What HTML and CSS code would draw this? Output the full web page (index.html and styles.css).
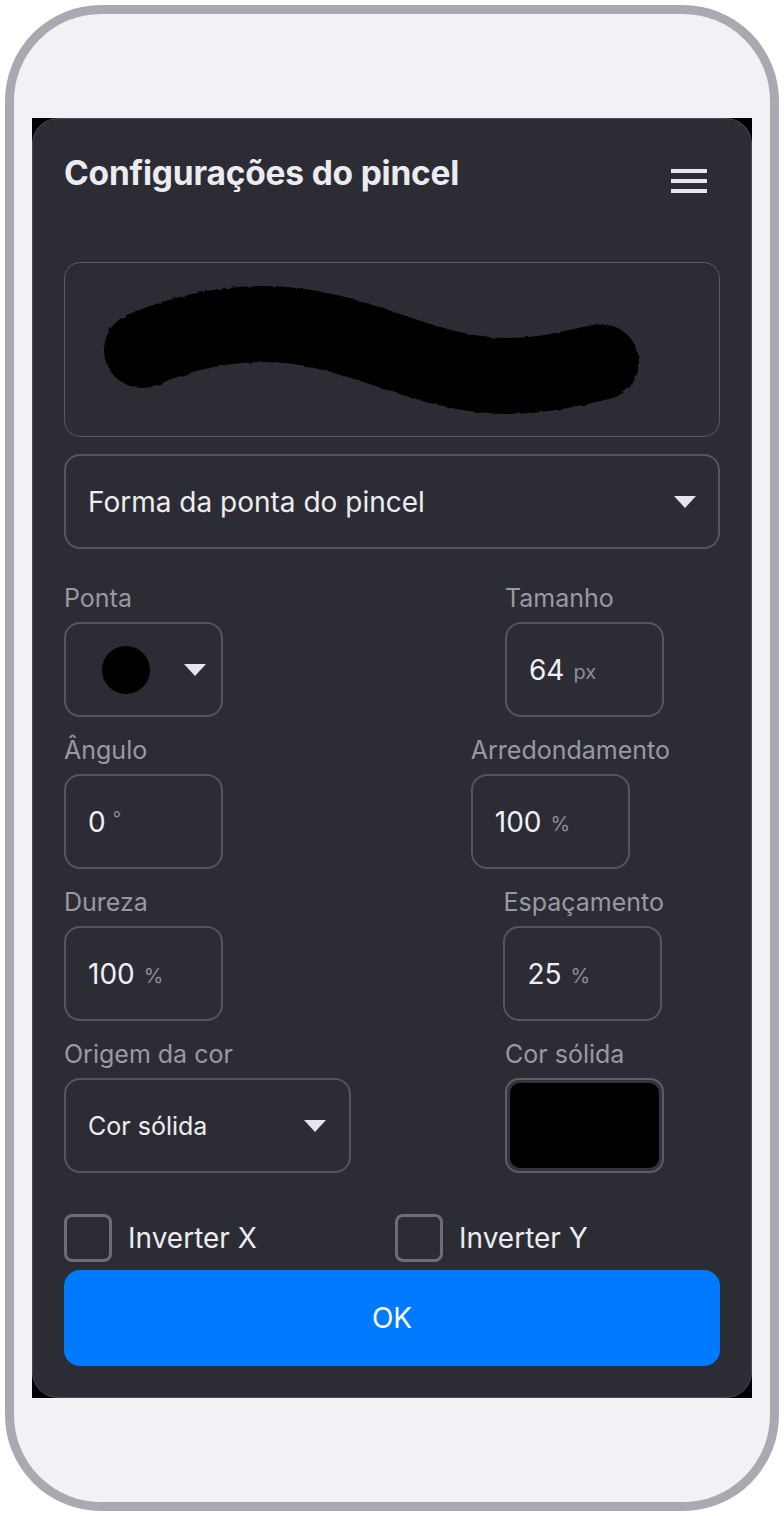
FILE: index.html
```html
<!DOCTYPE html>
<html lang="pt">
<head>
<meta charset="utf-8">
<title>Configurações do pincel</title>
<link rel="stylesheet" href="styles.css">
</head>
<body>
<div class="phone">
  <div class="screen">
    <div class="panel">
      <div class="header">
        <h1 class="title">Configurações do pincel</h1>
        <svg class="menu" width="36" height="26" viewBox="0 0 36 26" aria-hidden="true">
          <rect x="0" y="0" width="36" height="4" fill="#e6e6eb"/>
          <rect x="0" y="10" width="36" height="4" fill="#e6e6eb"/>
          <rect x="0" y="20" width="36" height="4" fill="#e6e6eb"/>
        </svg>
      </div>

      <div class="preview">
        <svg class="stroke" width="653" height="173" viewBox="1 1 653 173" aria-hidden="true">
          <defs>
            <filter id="rough" filterUnits="userSpaceOnUse" x="0" y="0" width="660" height="180">
              <feTurbulence type="fractalNoise" baseFrequency="0.12" numOctaves="2" seed="3" result="n"/>
              <feDisplacementMap in="SourceGraphic" in2="n" scale="3"/>
            </filter>
          </defs>
          <path d="M78,88 C120,70 160,62 201,62 C290,62 360,114 441,114 C480,114 510,106 537,100" fill="none" stroke="#000" stroke-width="76" stroke-linecap="round" filter="url(#rough)"/>
        </svg>
      </div>

      <div class="select select--full">
        <span class="select-text">Forma da ponta do pincel</span>
        <span class="caret"></span>
      </div>

      <div class="row">
        <div class="field">
          <div class="label">Ponta</div>
          <div class="box box--tip">
            <span class="dot"></span>
            <span class="caret"></span>
          </div>
        </div>
        <div class="field field--right">
          <div class="label">Tamanho</div>
          <div class="box"><span class="value">64</span><span class="unit">px</span></div>
        </div>
      </div>

      <div class="row">
        <div class="field">
          <div class="label">Ângulo</div>
          <div class="box"><span class="value">0</span><span class="unit unit--deg">°</span></div>
        </div>
        <div class="field field--right field--wide">
          <div class="label">Arredondamento</div>
          <div class="box"><span class="value">100</span><span class="unit">%</span></div>
        </div>
      </div>

      <div class="row">
        <div class="field">
          <div class="label">Dureza</div>
          <div class="box"><span class="value">100</span><span class="unit">%</span></div>
        </div>
        <div class="field field--right">
          <div class="label">Espaçamento</div>
          <div class="box"><span class="value">25</span><span class="unit">%</span></div>
        </div>
      </div>

      <div class="row">
        <div class="field">
          <div class="label">Origem da cor</div>
          <div class="select select--color">
            <span class="select-text select-text--small">Cor sólida</span>
            <span class="caret"></span>
          </div>
        </div>
        <div class="field field--right">
          <div class="label">Cor sólida</div>
          <div class="swatch"><span class="swatch-fill"></span></div>
        </div>
      </div>

      <div class="checks">
        <label class="check"><span class="checkbox"></span><span class="check-text">Inverter X</span></label>
        <label class="check"><span class="checkbox"></span><span class="check-text">Inverter Y</span></label>
      </div>

      <button class="ok" type="button">OK</button>
    </div>
  </div>
</div>
</body>
</html>
```

FILE: styles.css
```css
* { box-sizing: border-box; }

html, body {
  margin: 0;
  padding: 0;
  background: #ffffff;
}

body {
  font-family: Inter, "Noto Sans", "Liberation Sans", sans-serif;
  color: #ececf1;
}

.phone {
  margin: 5px;
  width: 774px;
  height: 1506px;
  border: 9px solid #a9a9b1;
  border-radius: 96px;
  background: #f2f2f6;
  padding: 104px 18px 0 18px;
}

.screen {
  width: 720px;
  height: 1280px;
  background: #000;
}

.panel {
  height: 1280px;
  background: #2c2c34;
  border: 1px solid #4a4a57;
  border-radius: 26px;
  padding: 0 31px;
  display: flex;
  flex-direction: column;
}

.header {
  display: flex;
  justify-content: space-between;
  align-items: flex-start;
  padding-top: 34px;
  margin-bottom: 67px;
}

.title {
  margin: 0;
  font-size: 33.5px;
  font-weight: 700;
  line-height: 41px;
  color: #ebebf0;
  letter-spacing: -0.2px;
}

.menu {
  display: block;
  margin-top: 16px;
  margin-right: 13px;
}

.preview {
  height: 175px;
  border: 1px solid #5a5a64;
  border-radius: 16px;
  overflow: hidden;
}

.stroke { display: block; }

.select {
  display: flex;
  align-items: center;
  justify-content: space-between;
  height: 95px;
  border: 2px solid #55555e;
  border-radius: 16px;
  padding: 0 22px;
}

.select--full {
  margin-top: 17px;
  margin-bottom: 35px;
}

.select--color {
  width: 287px;
  padding-right: 23px;
}

.select-text {
  font-size: 28px;
  color: #ececf1;
}

.select-text--small { font-size: 25px; }

.caret {
  width: 0;
  height: 0;
  border-left: 11px solid transparent;
  border-right: 11px solid transparent;
  border-top: 12px solid #e6e6eb;
}

.row {
  display: flex;
  justify-content: space-between;
  align-items: flex-start;
  margin-bottom: 19px;
}

.field {
  display: flex;
  flex-direction: column;
  align-items: flex-start;
}

.field--right { margin-right: 56px; }
.field--wide { margin-right: 50px; }

.label {
  font-size: 25px;
  line-height: 28px;
  color: #9999a2;
  margin-bottom: 10px;
  white-space: nowrap;
}

.box {
  width: 159px;
  height: 95px;
  border: 2px solid #55555e;
  border-radius: 16px;
  display: flex;
  align-items: center;
  padding-left: 22px;
}

.box--tip {
  padding-left: 36px;
  gap: 34px;
}

.dot {
  width: 48px;
  height: 48px;
  border-radius: 50%;
  background: #000;
}

.value {
  font-size: 28px;
  color: #f0f0f4;
}

.unit {
  font-size: 20px;
  color: #8e8e98;
  margin-left: 9px;
  margin-top: 4px;
}

.unit--deg {
  font-size: 18px;
  margin-top: -6px;
  margin-left: 7px;
}

.swatch {
  width: 159px;
  height: 95px;
  border: 2px solid #5c5c66;
  border-radius: 14px;
  padding: 3px;
  background: #33333b;
}

.swatch-fill {
  display: block;
  width: 100%;
  height: 100%;
  background: #000;
  border-radius: 10px;
}

.checks {
  display: grid;
  grid-template-columns: 1fr 1fr;
  column-gap: 6px;
  margin-top: 22px;
}

.check {
  display: flex;
  align-items: center;
}

.checkbox {
  width: 48px;
  height: 48px;
  border: 3px solid #6d6d74;
  border-radius: 8px;
}

.check-text {
  margin-left: 16px;
  font-size: 28px;
  color: #ececf1;
}

.ok {
  margin-top: 8px;
  height: 96px;
  width: 100%;
  border: 0;
  border-radius: 16px;
  background: #007aff;
  color: #ffffff;
  font-family: Inter, "Noto Sans", "Liberation Sans", sans-serif;
  font-size: 28px;
  padding: 0;
}
```
